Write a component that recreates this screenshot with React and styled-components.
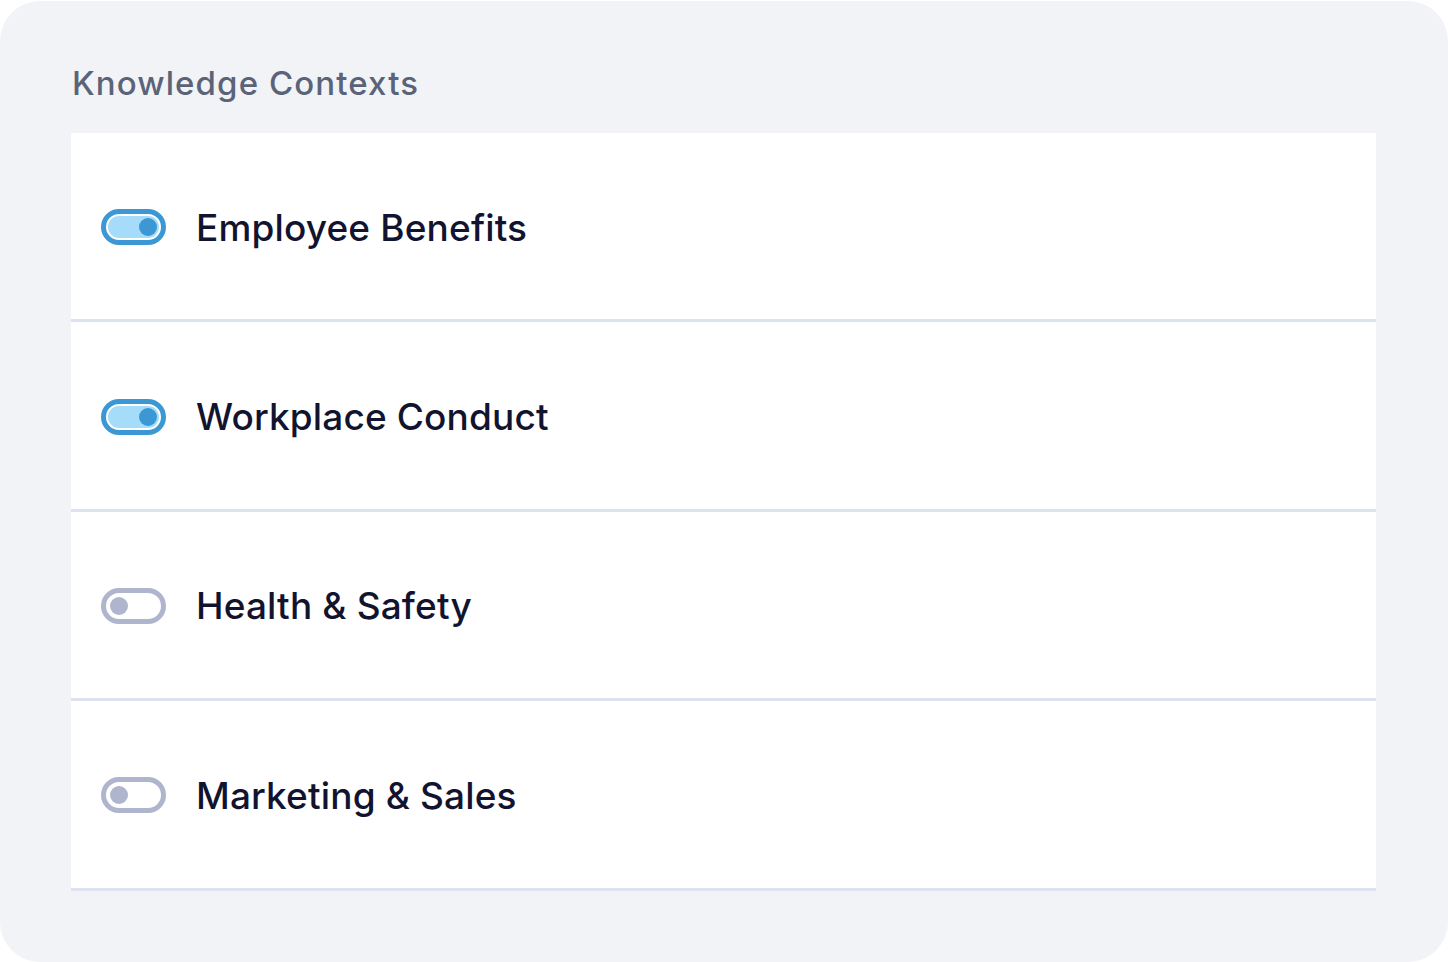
import React, {useState} from 'react';
import styled, {createGlobalStyle} from 'styled-components';

const GlobalStyle = createGlobalStyle`
  html, body { margin: 0; padding: 0; background: #ffffff; }
  body { font-family: Inter, "Noto Sans", "Liberation Sans", sans-serif; }
`

const contexts = [
  {name: 'Employee Benefits', on: true},
  {name: 'Workplace Conduct', on: true},
  {name: 'Health & Safety', on: false},
  {name: 'Marketing & Sales', on: false},
]

const Panel = styled.div`
  box-sizing: border-box;
  margin-top: 1px;
  width: 1448px;
  height: 961px;
  background: #f1f3f7;
  border-radius: 40px;
  padding: 58px 72px 0 71px;
`

const Title = styled.h2`
  margin: 0 0 26px 1px;
  font-size: 33px;
  line-height: 48px;
  font-weight: 500;
  color: #5b6379;
  letter-spacing: 1.1px;
`

const List = styled.div`
  display: flex;
  flex-direction: column;
  background: #ffffff;
`

const Row = styled.div`
  box-sizing: border-box;
  height: 189.4px;
  display: flex;
  align-items: center;
  gap: 30px;
  padding-left: 30px;
  border-bottom: 3px solid #dde2f0;
`

const Switch = styled.button`
  box-sizing: border-box;
  width: 65px;
  height: 36px;
  margin-top: 2px;
  padding: 2px;
  border-radius: 999px;
  border: 5px solid ${p => p.$on ? '#3b98d5' : '#aeb5cd'};
  background: #ffffff;
  display: flex;
  cursor: pointer;
`

const Track = styled.span`
  flex: 1;
  border-radius: 999px;
  background: ${p => p.$on ? '#a5dcf9' : '#ffffff'};
  display: flex;
  align-items: center;
  justify-content: ${p => p.$on ? 'flex-end' : 'flex-start'};
  padding: 0 2px;
`

const Knob = styled.span`
  width: 18px;
  height: 18px;
  border-radius: 50%;
  background: ${p => p.$on ? '#3b98d5' : '#aeb5cd'};
`

const Label = styled.span`
  font-size: 37px;
  font-weight: 500;
  color: #12142f;
  letter-spacing: 0.15px;
  margin-top: 2px;
`

export default function App() {
  const [items, setItems] = useState(contexts)

  function toggle(i) {
    setItems(items.map((it, j) => j === i ? {...it, on: !it.on} : it))
  }

  return (
    <>
      <GlobalStyle />
      <Panel>
        <Title>Knowledge Contexts</Title>
        <List>
          {items.map((it, i) => (
            <Row key={it.name}>
              <Switch $on={it.on} onClick={() => toggle(i)} aria-pressed={it.on}>
                <Track $on={it.on}><Knob $on={it.on} /></Track>
              </Switch>
              <Label>{it.name}</Label>
            </Row>
          ))}
        </List>
      </Panel>
    </>
  )
}
